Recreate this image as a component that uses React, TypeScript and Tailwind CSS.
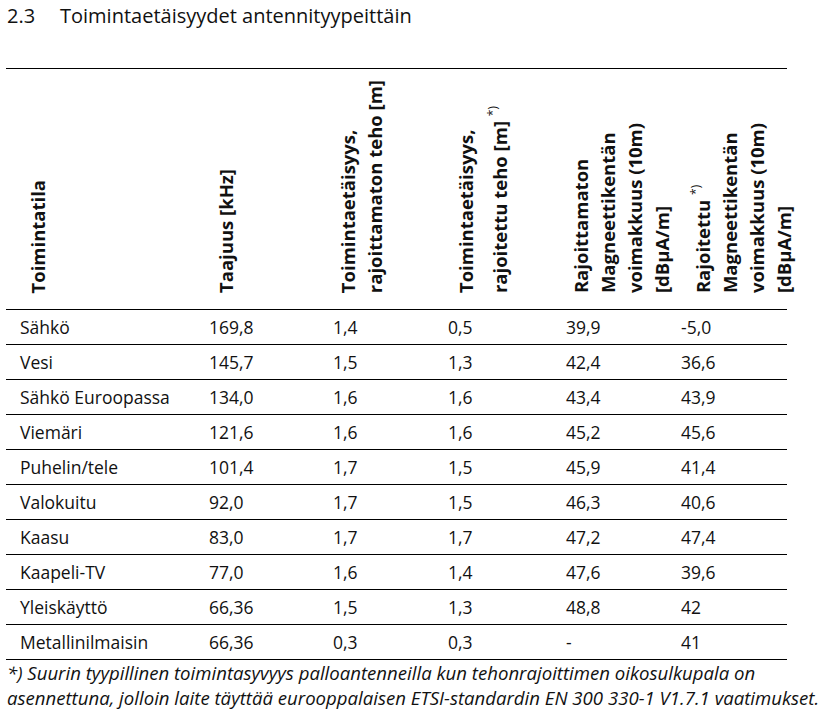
import React from "react";

const rows: string[][] = [
  ["Sähkö", "169,8", "1,4", "0,5", "39,9", "-5,0"],
  ["Vesi", "145,7", "1,5", "1,3", "42,4", "36,6"],
  ["Sähkö Euroopassa", "134,0", "1,6", "1,6", "43,4", "43,9"],
  ["Viemäri", "121,6", "1,6", "1,6", "45,2", "45,6"],
  ["Puhelin/tele", "101,4", "1,7", "1,5", "45,9", "41,4"],
  ["Valokuitu", "92,0", "1,7", "1,5", "46,3", "40,6"],
  ["Kaasu", "83,0", "1,7", "1,7", "47,2", "47,4"],
  ["Kaapeli-TV", "77,0", "1,6", "1,4", "47,6", "39,6"],
  ["Yleiskäyttö", "66,36", "1,5", "1,3", "48,8", "42"],
  ["Metallinilmaisin", "66,36", "0,3", "0,3", "-", "41"],
];

const grid = "grid grid-cols-[189px_124px_115px_118px_115px_106px] pl-[14px]";

function VHead({ children, pad }: { children: React.ReactNode; pad: string }) {
  return (
    <div className={`flex items-end pb-[16px] ${pad}`}>
      <div className="[writing-mode:vertical-rl] rotate-180 font-bold text-[18.5px] leading-[27px]">
        {children}
      </div>
    </div>
  );
}

export default function App() {
  return (
    <div
      className="w-[825px] h-[711px] bg-white text-[#111] overflow-hidden"
      style={{ fontFamily: "'Open Sans', 'Noto Sans', sans-serif" }}
    >
      <div className="flex pl-[7px] pt-[2px] h-[68px] text-[20px] leading-[28px]">
        <span className="w-[53px]">2.3</span>
        <span>Toimintaetäisyydet antennityypeittäin</span>
      </div>
      <div className="ml-[6px] w-[781px]">
        <div className={`${grid} h-[242px] border-t border-b border-black`}>
          <VHead pad="pl-[4px]">Toimintatila</VHead>
          <VHead pad="pl-[3px]">Taajuus [kHz]</VHead>
          <VHead pad="pl-[1px]">
            Toimintaetäisyys,
            <br />
            rajoittamaton teho [m]
          </VHead>
          <VHead pad="pl-[4px]">
            Toimintaetäisyys,
            <br />
            rajoitettu teho [m]{" "}
            <span className="align-super font-normal text-[12px]">*)</span>
          </VHead>
          <VHead pad="pl-[1px]">
            Rajoittamaton
            <br />
            Magneettikentän
            <br />
            voimakkuus (10m)
            <br />
            [dBµA/m]
          </VHead>
          <VHead pad="pl-[1px]">
            Rajoitettu <span className="align-super font-normal text-[12px]">*)</span>
            <br />
            Magneettikentän
            <br />
            voimakkuus (10m)
            <br />
            [dBµA/m]
          </VHead>
        </div>
        {rows.map((r, i) => (
          <div
            key={i}
            className={`${grid} h-[35px] items-center border-b border-black text-[17.5px]`}
          >
            {r.map((c, j) => (
              <div key={j}>{c}</div>
            ))}
          </div>
        ))}
      </div>
      <div className="pl-[7px] italic text-[18.6px] leading-[25px] whitespace-nowrap">
        *) Suurin tyypillinen toimintasyvyys palloantenneilla kun tehonrajoittimen oikosulkupala on
        <br />
        asennettuna, jolloin laite täyttää eurooppalaisen ETSI-standardin EN 300 330-1 V1.7.1 vaatimukset.
      </div>
    </div>
  );
}
